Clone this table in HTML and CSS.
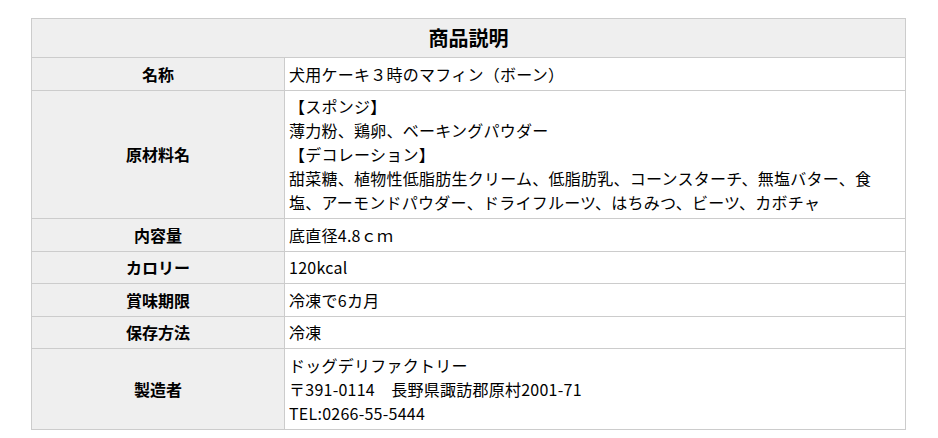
FILE: index.html
```html
<!DOCTYPE html>
<html lang="ja">
<head>
<meta charset="utf-8">
<link rel="stylesheet" href="styles.css">
</head>
<body>
<table class="spec">
  <colgroup>
    <col class="c-label">
    <col class="c-value">
  </colgroup>
  <thead>
    <tr><th colspan="2" class="title">商品説明</th></tr>
  </thead>
  <tbody>
    <tr><th>名称</th><td>犬用ケーキ３時のマフィン（ボーン）</td></tr>
    <tr><th>原材料名</th><td>【スポンジ】<br>薄力粉、鶏卵、ベーキングパウダー<br>【デコレーション】<br>甜菜糖、植物性低脂肪生クリーム、低脂肪乳、コーンスターチ、無塩バター、食塩、アーモンドパウダー、ドライフルーツ、はちみつ、ビーツ、カボチャ</td></tr>
    <tr><th>内容量</th><td>底直径4.8ｃｍ</td></tr>
    <tr><th>カロリー</th><td>120kcal</td></tr>
    <tr><th>賞味期限</th><td>冷凍で6カ月</td></tr>
    <tr><th>保存方法</th><td>冷凍</td></tr>
    <tr><th>製造者</th><td>ドッグデリファクトリー<br>〒391-0114　長野県諏訪郡原村2001-71<br>TEL:0266-55-5444</td></tr>
  </tbody>
</table>
</body>
</html>
```
FILE: styles.css
```css
html, body {
  margin: 0;
  padding: 0;
  background: #fff;
}
body {
  padding: 18px 0 0 31px;
  font-family: "Noto Sans CJK JP", "Noto Sans", sans-serif;
  color: #000;
}
.spec {
  width: 875px;
  border-collapse: collapse;
  table-layout: fixed;
  font-size: 16px;
  line-height: 24px;
}
.c-label {
  width: 253px;
}
.spec th, .spec td {
  border: 1px solid #ccc;
  padding: 3.75px 4px;
  vertical-align: middle;
}
.spec th {
  background: #efefef;
  font-weight: bold;
  text-align: center;
}
.spec td {
  text-align: left;
  letter-spacing: 0.25px;
}
.spec th.title {
  font-size: 20px;
  line-height: 30px;
  padding: 4px;
}
```
